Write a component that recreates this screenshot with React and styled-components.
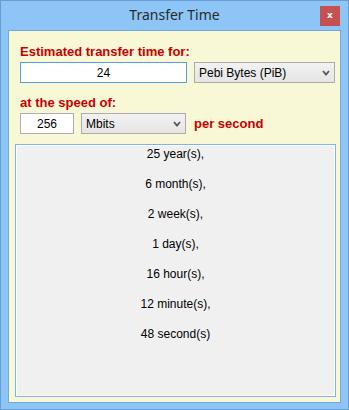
import React from "react";
import styled, { createGlobalStyle } from "styled-components";

const GlobalStyles = createGlobalStyle`
  html, body {
    margin: 0;
    padding: 0;
    background: #ffffff;
  }
  * {
    box-sizing: border-box;
  }
`;

const Window = styled.div`
  width: 349px;
  height: 410px;
  background: #8cc5f6;
  border: 1px solid #6b9dd2;
  display: flex;
  flex-direction: column;
  font-family: "Liberation Sans", Arial, sans-serif;
`;

const TitleBar = styled.div`
  height: 29px;
  display: grid;
  grid-template-columns: 1fr auto 1fr;
  align-items: start;
`;

const Title = styled.div`
  grid-column: 2;
  padding-top: 4px;
  font-family: "Noto Sans", "Open Sans", sans-serif;
  font-size: 14px;
  line-height: 20px;
  color: #2b2b2b;
`;

const CloseButton = styled.div`
  grid-column: 3;
  justify-self: end;
  margin: 5px 8px 0 0;
  width: 20px;
  height: 20px;
  background: #c75050;
  color: #ffffff;
  font-family: "DejaVu Sans", sans-serif;
  font-weight: bold;
  font-size: 9px;
  line-height: 18px;
  display: flex;
  justify-content: center;
`;

const Client = styled.div`
  margin: 0 7px 0 7px;
  height: 373px;
  background: #f8f8d6;
  border: 1px solid #72a8dc;
  padding: 13px 5px 5px 6px;
  display: flex;
  flex-direction: column;
`;

const Form = styled.div`
  padding-left: 5px;
  display: flex;
  flex-direction: column;
`;

const Label = styled.div`
  font-size: 13px;
  line-height: 15px;
  font-weight: bold;
  color: #c80000;
  margin-top: ${(p) => p.$top || 0}px;
`;

const Row = styled.div`
  margin-top: 3px;
  display: flex;
  align-items: center;
  gap: ${(p) => p.$gap}px;
`;

const TextInput = styled.input`
  width: ${(p) => p.$width}px;
  height: 21px;
  border: 1px solid ${(p) => (p.$focused ? "#569de5" : "#abadb3")};
  background: #ffffff;
  font-family: "Liberation Sans", Arial, sans-serif;
  font-size: 12px;
  color: #000000;
  text-align: center;
  padding: 0 2px;
  outline: none;
`;

const Dropdown = styled.div`
  width: ${(p) => p.$width}px;
  height: 21px;
  border: 1px solid #acacac;
  background: linear-gradient(#f2f2f2, #e5e5e5);
  display: flex;
  align-items: center;
  justify-content: space-between;
  padding: 0 4px 0 4px;
  font-size: 12px;
  color: #000000;
`;

const Chevron = styled.svg`
  width: 8px;
  height: 6px;
  flex-shrink: 0;
`;

const PerSecond = styled.span`
  font-size: 13px;
  font-weight: bold;
  color: #c80000;
  margin-left: 1px;
`;

const Results = styled.div`
  margin-top: 10px;
  width: 321px;
  flex: 1;
  background: #f0f0f0;
  border: 1px solid #7eb4ea;
  box-shadow: inset 0 0 0 1px #ffffff;
  padding-top: 0;
  display: flex;
  flex-direction: column;
  align-items: center;
  gap: 12px;
`;

const ResultLine = styled.div`
  font-size: 12px;
  line-height: 18px;
  color: #000000;
`;

const Select = ({ width, children }) => (
  <Dropdown $width={width}>
    <span>{children}</span>
    <Chevron viewBox="0 0 8 6">
      <path d="M1 1 L4 4.5 L7 1" fill="none" stroke="#555" strokeWidth="1.8" />
    </Chevron>
  </Dropdown>
);

const lines = [
  "25 year(s),",
  "6 month(s),",
  "2 week(s),",
  "1 day(s),",
  "16 hour(s),",
  "12 minute(s),",
  "48 second(s)",
];

export default function App() {
  return (
    <Window>
      <GlobalStyles />
      <TitleBar>
        <Title>Transfer Time</Title>
        <CloseButton>x</CloseButton>
      </TitleBar>
      <Client>
        <Form>
          <Label>Estimated transfer time for:</Label>
          <Row $gap={7}>
            <TextInput $width={167} $focused defaultValue="24" />
            <Select width={141}>Pebi Bytes (PiB)</Select>
          </Row>
          <Label $top={12}>at the speed of:</Label>
          <Row $gap={7}>
            <TextInput $width={54} defaultValue="256" />
            <Select width={105}>Mbits</Select>
            <PerSecond>per second</PerSecond>
          </Row>
        </Form>
        <Results>
          {lines.map((l) => (
            <ResultLine key={l}>{l}</ResultLine>
          ))}
        </Results>
      </Client>
    </Window>
  );
}
